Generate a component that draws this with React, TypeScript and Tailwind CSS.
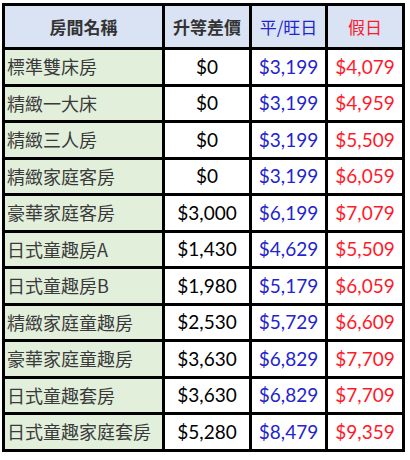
const rows = [
  { name: "標準雙床房", diff: "$0", weekday: "$3,199", holiday: "$4,079" },
  { name: "精緻一大床", diff: "$0", weekday: "$3,199", holiday: "$4,959" },
  { name: "精緻三人房", diff: "$0", weekday: "$3,199", holiday: "$5,509" },
  { name: "精緻家庭客房", diff: "$0", weekday: "$3,199", holiday: "$6,059" },
  { name: "豪華家庭客房", diff: "$3,000", weekday: "$6,199", holiday: "$7,079" },
  { name: "日式童趣房A", diff: "$1,430", weekday: "$4,629", holiday: "$5,509" },
  { name: "日式童趣房B", diff: "$1,980", weekday: "$5,179", holiday: "$6,059" },
  { name: "精緻家庭童趣房", diff: "$2,530", weekday: "$5,729", holiday: "$6,609" },
  { name: "豪華家庭童趣房", diff: "$3,630", weekday: "$6,829", holiday: "$7,709" },
  { name: "日式童趣套房", diff: "$3,630", weekday: "$6,829", holiday: "$7,709" },
  { name: "日式童趣家庭套房", diff: "$5,280", weekday: "$8,479", holiday: "$9,359" },
]

const cjk = "font-['Noto_Sans_CJK_TC','Noto_Sans',sans-serif]"
const num = "font-['Lato','Noto_Sans_CJK_TC',sans-serif]"

export default function App() {
  return (
    <div className="min-h-[460px] w-[410px] bg-white pl-[2px] pt-[3px]">
      <div className="grid w-[403px] grid-cols-[157px_84px_73px_74px] gap-[3px] bg-black p-[3px]">
        <div className={`flex h-[41px] items-center justify-center bg-[#dae3f3] text-[17px] font-bold text-[#333333] ${cjk}`}>
          房間名稱
        </div>
        <div className={`flex h-[41px] items-center justify-center bg-[#dae3f3] text-[17px] font-bold text-[#333333] ${cjk}`}>
          升等差價
        </div>
        <div className={`flex h-[41px] items-center justify-center bg-[#dae3f3] text-[17px] text-[#2323d0] ${cjk}`}>
          平/旺日
        </div>
        <div className={`flex h-[41px] items-center justify-center bg-[#dae3f3] text-[17px] text-[#ff1a2a] ${cjk}`}>
          假日
        </div>
        {rows.map((r) => (
          <div key={r.name} className="contents">
            <div className={`flex h-[33.5px] items-center bg-[#e2efda] pl-[2px] text-[18px] text-[#3a3a3a] ${cjk}`}>
              {r.name}
            </div>
            <div className={`flex h-[33.5px] items-center justify-center bg-white text-[19px] text-black ${num}`}>
              {r.diff}
            </div>
            <div className={`flex h-[33.5px] items-center justify-center bg-white text-[19px] text-[#2323d0] ${num}`}>
              {r.weekday}
            </div>
            <div className={`flex h-[33.5px] items-center justify-center bg-white text-[19px] text-[#ff1a2a] ${num}`}>
              {r.holiday}
            </div>
          </div>
        ))}
      </div>
    </div>
  )
}
